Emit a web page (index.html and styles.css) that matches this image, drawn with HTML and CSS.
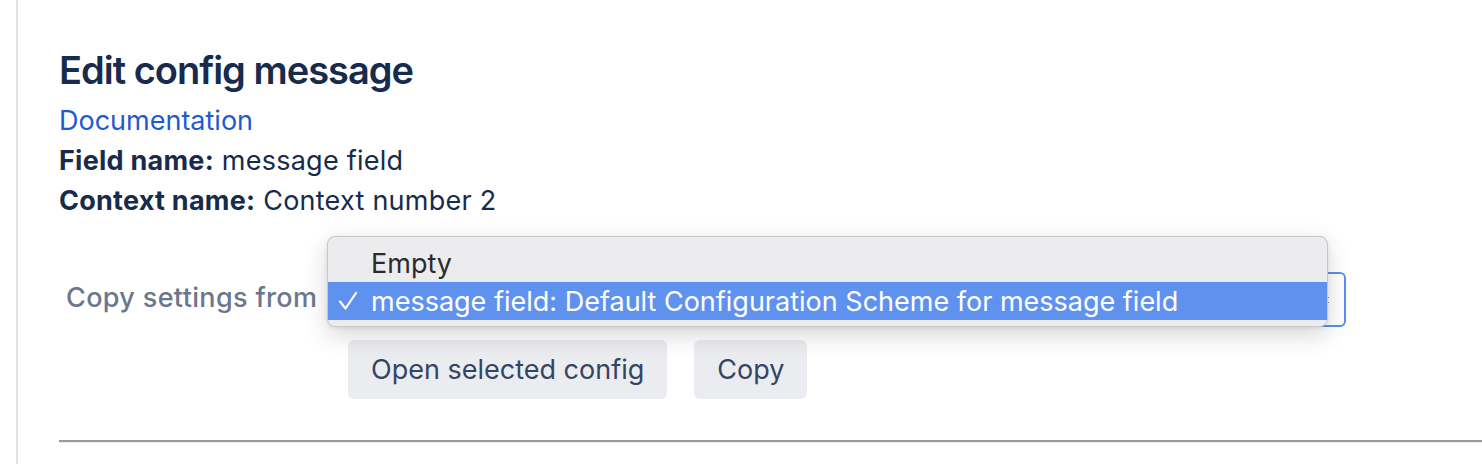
FILE: index.html
```html
<!DOCTYPE html>
<html>
<head>
<meta charset="utf-8">
<link rel="stylesheet" href="styles.css">
</head>
<body>
<div class="page">
  <div class="content">
    <h1 class="title">Edit config message</h1>
    <a class="doc-link" href="#">Documentation</a>
    <div class="meta"><b>Field name:</b> message field</div>
    <div class="meta"><b>Context name:</b> Context number 2</div>
    <div class="form-row">
      <label class="label">Copy settings from</label>
      <div class="field">
        <div class="select">
          <span class="select-value">message field: Default Configuration Scheme for message field</span>
          <svg class="caret" width="10" height="14" viewBox="0 0 10 14"><path d="M1 5 L5 1 L9 5 Z M1 9 L5 13 L9 9 Z" fill="#172b4d"/></svg>
          <div class="menu">
            <div class="option"><span class="check"></span>Empty</div>
            <div class="option selected"><span class="check"><svg width="20" height="20" viewBox="0 0 20 20"><path d="M2 10.5 L7.5 17.5 L18 2" fill="none" stroke="#fff" stroke-width="2.2" stroke-linecap="round" stroke-linejoin="round"/></svg></span>message field: Default Configuration Scheme for message field</div>
          </div>
        </div>
        <div class="buttons">
          <button class="btn">Open selected config</button>
          <button class="btn">Copy</button>
        </div>
      </div>
    </div>
    <hr class="rule">
  </div>
</div>
</body>
</html>
```
FILE: styles.css
```css
html, body {
  margin: 0;
  padding: 0;
  background: #fff;
}
body {
  font-family: Inter, "Noto Sans", sans-serif;
  color: #172b4d;
  overflow: hidden;
}
.page {
  margin-left: 16px;
  border-left: 2px solid #dfe1e6;
  min-height: 464px;
}
.content {
  padding: 47px 0 0 41px;
}
.title {
  margin: 0;
  font-size: 38px;
  line-height: 46px;
  font-weight: 600;
  letter-spacing: -1px;
  color: #172b4d;
}
.doc-link {
  display: block;
  margin-top: 8px;
  font-size: 27px;
  line-height: 40px;
  color: #1f5ad0;
  text-decoration: none;
}
.meta {
  font-size: 27px;
  line-height: 40px;
  color: #172b4d;
  letter-spacing: 0.25px;
}
.meta b {
  font-weight: 700;
}
.form-row {
  display: flex;
  align-items: flex-start;
  margin-top: 51px;
}
.label {
  width: 289px;
  padding-left: 7px;
  box-sizing: border-box;
  font-size: 27px;
  line-height: 51px;
  color: #6b778c;
  font-weight: 500;
  letter-spacing: 0.35px;
  white-space: nowrap;
}
.field {
  display: flex;
  flex-direction: column;
  gap: 13px;
}
.select {
  position: relative;
  width: 998px;
  height: 55px;
  box-sizing: border-box;
  border: 2px solid #5b8ef0;
  border-radius: 6px;
  display: flex;
  align-items: center;
  padding: 0 14px 0 20px;
  font-size: 27px;
  color: #172b4d;
}
.select-value {
  flex: 1;
  white-space: nowrap;
  overflow: hidden;
}
.caret {
  flex: none;
}
.menu {
  position: absolute;
  left: -23px;
  top: -38px;
  width: 1001px;
  box-sizing: border-box;
  padding: 7px 0 6px;
  background: #ececef;
  border: 1px solid #c8c8cc;
  border-radius: 8px;
  box-shadow: 0 8px 24px rgba(0,0,0,0.16), 0 1px 4px rgba(0,0,0,0.08);
  font-size: 27px;
}
.option {
  display: flex;
  align-items: center;
  height: 38px;
  color: #2b2b2b;
  white-space: nowrap;
}
.option.selected {
  background: #5f92ef;
  color: #fff;
}
.check {
  width: 43px;
  padding-left: 10px;
  box-sizing: border-box;
  flex: none;
  display: flex;
  align-items: center;
}
.buttons {
  display: flex;
  gap: 27px;
}
.btn {
  font-family: inherit;
  font-size: 27px;
  height: 59px;
  padding: 0 23px;
  border: none;
  border-radius: 6px;
  background: #ebecf0;
  color: #344563;
}
.rule {
  margin: 41px 0 0 0;
  border: none;
  border-top: 2px solid #9a9a9a;
  border-bottom: 1px solid #ebebeb;
  height: 0;
}
```
